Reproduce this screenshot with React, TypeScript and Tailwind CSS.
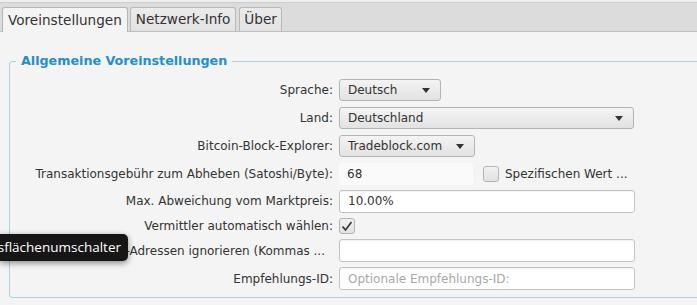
import React from 'react';

const font = { fontFamily: '"DejaVu Sans", sans-serif' };

function Arrow() {
  return <span className="w-0 h-0 border-l-[4px] border-r-[4px] border-t-[5px] border-l-transparent border-r-transparent border-t-[#333]" />;
}

function Combo({ value, width }: { value: string; width: string }) {
  return (
    <div className={`${width} h-[22px] flex items-center justify-between pl-2 pr-[10px] rounded-[3px] border border-[#b3b3b3] bg-gradient-to-b from-[#f4f4f4] to-[#e2e2e2] text-[#333]`}>
      <span>{value}</span>
      <Arrow />
    </div>
  );
}

function Field({ value, placeholder }: { value?: string; placeholder?: string }) {
  return (
    <div className="w-[296px] h-[23px] flex items-center px-2 rounded-[3px] border border-[#c3c3c3] bg-white shadow-[inset_0_1px_1px_rgba(0,0,0,0.06)]">
      {value ? <span className="text-[#333]">{value}</span> : <span className="text-[#a8a8a8]">{placeholder}</span>}
    </div>
  );
}

function Row({ label, children, h, mt, pr = 'pr-[6px]' }: { label: string; children: React.ReactNode; h: string; mt: string; pr?: string }) {
  return (
    <div className={`flex items-center ${h} ${mt}`}>
      <div className={`w-[329px] shrink-0 text-right text-[#333] whitespace-nowrap ${pr}`}>{label}</div>
      {children}
    </div>
  );
}

export default function App() {
  return (
    <div className="w-[697px] h-[305px] overflow-hidden bg-[#f4f4f4] relative text-[12px]" style={font}>
      <div className="h-[3px] bg-[#efefef] border-b border-[#cdcdcd]" />
      <div className="h-[29px] bg-[#dcdcdc] border-b border-[#bdbdbd] flex items-end pl-[2px] gap-[2px] text-[13.6px]">
        <div className="h-[25px] -mb-px px-[5px] flex items-center rounded-t-[3px] border border-b-0 border-[#b5b5b5] bg-[#f4f4f4] text-[#333]">Voreinstellungen</div>
        <div className="h-[24px] px-[5px] flex items-center rounded-t-[3px] border border-b-0 border-[#b8b8b8] bg-gradient-to-b from-[#ebebeb] to-[#e2e2e2] text-[#333]">Netzwerk-Info</div>
        <div className="h-[24px] ml-px px-[4px] flex items-center rounded-t-[3px] border border-b-0 border-[#b8b8b8] bg-gradient-to-b from-[#ebebeb] to-[#e2e2e2] text-[#333]">Über</div>
      </div>

      <fieldset className="absolute left-[9px] top-[53px] w-[720px] h-[245px] border border-[#a9d2e3] rounded-[3px] pl-0 pt-0 m-0">
        <legend className="ml-[6px] px-[5px] font-bold text-[#1f8fd2] text-[12.7px] leading-[16px]">Allgemeine Voreinstellungen</legend>
        <div className="flex flex-col pt-[10px]">
          <Row label="Sprache:" h="h-[22px]" mt="mt-0"><Combo value="Deutsch" width="w-[102px]" /></Row>
          <Row label="Land:" h="h-[22px]" mt="mt-[6px]"><Combo value="Deutschland" width="w-[295px]" /></Row>
          <Row label="Bitcoin-Block-Explorer:" h="h-[22px]" mt="mt-[6px]"><Combo value="Tradeblock.com" width="w-[136px]" /></Row>
          <Row label="Transaktionsgebühr zum Abheben (Satoshi/Byte):" h="h-[22px]" mt="mt-[6px]">
            <div className="w-[134px] h-[22px] flex items-center px-2 rounded-[3px] bg-[#fafafa] text-[#333]">68</div>
            <div className="ml-[10px] w-[16px] h-[16px] rounded-[3px] border border-[#b3b3b3] bg-gradient-to-b from-[#f2f2f2] to-[#e2e2e2]" />
            <span className="ml-[6px] text-[#333]">Spezifischen Wert ...</span>
          </Row>
          <Row label="Max. Abweichung vom Marktpreis:" h="h-[22px]" mt="mt-[5px]"><Field value="10.00%" /></Row>
          <Row label="Vermittler automatisch wählen:" h="h-[16px]" mt="mt-[6px]">
            <div className="w-[16px] h-[16px] rounded-[3px] border border-[#b3b3b3] bg-gradient-to-b from-[#f2f2f2] to-[#e2e2e2] flex items-center justify-center">
              <svg width="12" height="11" viewBox="0 0 12 11"><path d="M1.5 5.5 L4.5 9 L10.5 1" fill="none" stroke="#333" strokeWidth="1.6" /></svg>
            </div>
          </Row>
          <Row label="Bitcoin-Adressen ignorieren (Kommas ..." h="h-[23px]" mt="mt-[5px]" pr="pr-[14px]"><Field /></Row>
          <Row label="Empfehlungs-ID:" h="h-[23px]" mt="mt-[5px]"><Field placeholder="Optionale Empfehlungs-ID:" /></Row>
        </div>
      </fieldset>

      <div
        className="absolute left-0 top-[234px] h-[27px] w-[128px] pr-[7px] flex items-center justify-end rounded-r-[5px] bg-[#161616] text-white text-[13.5px] shadow-[0_2px_6px_rgba(0,0,0,0.45)] overflow-hidden whitespace-nowrap"
        style={{ fontFamily: '"Open Sans", "Noto Sans", sans-serif' }}
      >
        Arbeitsflächenumschalter
      </div>
    </div>
  );
}
